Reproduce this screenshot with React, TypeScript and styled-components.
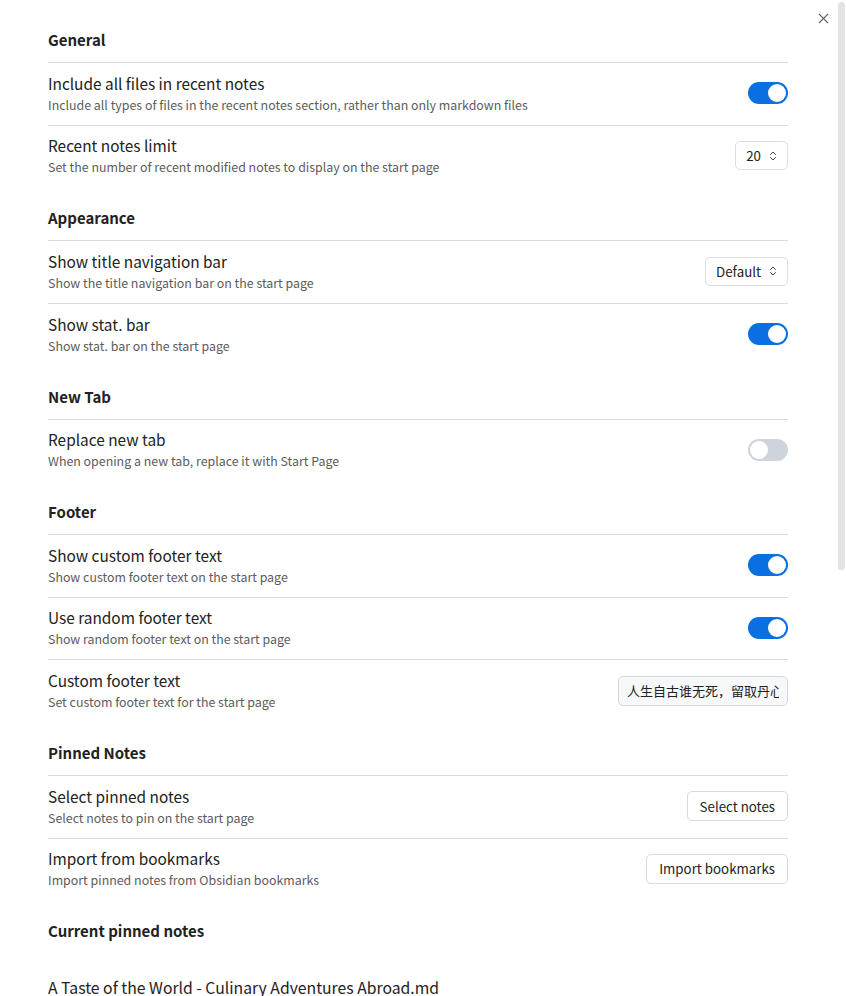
import React from "react";
import styled, { createGlobalStyle } from "styled-components";
import { ChevronsUpDown, X } from "lucide-react";

const GlobalStyle = createGlobalStyle`
  html, body {
    margin: 0;
    padding: 0;
    background: #ffffff;
  }
  body {
    font-family: "Noto Sans CJK SC", "Noto Sans", sans-serif;
    color: #222222;
  }
  * {
    box-sizing: border-box;
  }
`;

type Control =
  | { kind: "toggle"; on: boolean }
  | { kind: "select"; value: string }
  | { kind: "text"; value: string }
  | { kind: "button"; label: string };

interface ISetting {
  name: string;
  desc: string;
  control: Control;
}

interface ISection {
  title: string;
  items: ISetting[];
}

const SECTIONS: ISection[] = [
  {
    title: "General",
    items: [
      {
        name: "Include all files in recent notes",
        desc: "Include all types of files in the recent notes section, rather than only markdown files",
        control: { kind: "toggle", on: true },
      },
      {
        name: "Recent notes limit",
        desc: "Set the number of recent modified notes to display on the start page",
        control: { kind: "select", value: "20" },
      },
    ],
  },
  {
    title: "Appearance",
    items: [
      {
        name: "Show title navigation bar",
        desc: "Show the title navigation bar on the start page",
        control: { kind: "select", value: "Default" },
      },
      {
        name: "Show stat. bar",
        desc: "Show stat. bar on the start page",
        control: { kind: "toggle", on: true },
      },
    ],
  },
  {
    title: "New Tab",
    items: [
      {
        name: "Replace new tab",
        desc: "When opening a new tab, replace it with Start Page",
        control: { kind: "toggle", on: false },
      },
    ],
  },
  {
    title: "Footer",
    items: [
      {
        name: "Show custom footer text",
        desc: "Show custom footer text on the start page",
        control: { kind: "toggle", on: true },
      },
      {
        name: "Use random footer text",
        desc: "Show random footer text on the start page",
        control: { kind: "toggle", on: true },
      },
      {
        name: "Custom footer text",
        desc: "Set custom footer text for the start page",
        control: { kind: "text", value: "人生自古谁无死，留取丹心照汗青" },
      },
    ],
  },
  {
    title: "Pinned Notes",
    items: [
      {
        name: "Select pinned notes",
        desc: "Select notes to pin on the start page",
        control: { kind: "button", label: "Select notes" },
      },
      {
        name: "Import from bookmarks",
        desc: "Import pinned notes from Obsidian bookmarks",
        control: { kind: "button", label: "Import bookmarks" },
      },
    ],
  },
];

const PINNED = ["A Taste of the World - Culinary Adventures Abroad.md"];

const SettingControl: React.FC<{ control: Control }> = ({ control }) => {
  switch (control.kind) {
    case "toggle":
      return (
        <Toggle on={control.on}>
          <Knob />
        </Toggle>
      );
    case "select":
      return (
        <Dropdown>
          <span>{control.value}</span>
          <ChevronsUpDown size={12} strokeWidth={2} />
        </Dropdown>
      );
    case "text":
      return <TextInput type="text" value={control.value} readOnly />;
    case "button":
      return <Button>{control.label}</Button>;
  }
};

const App: React.FC = () => {
  return (
    <Window>
      <GlobalStyle />
      <Scroller>
        <Content>
          {SECTIONS.map((section) => (
            <React.Fragment key={section.title}>
              <Heading>{section.title}</Heading>
              {section.items.map((item) => (
                <Row key={item.name}>
                  <Info>
                    <Name>{item.name}</Name>
                    <Desc>{item.desc}</Desc>
                  </Info>
                  <SettingControl control={item.control} />
                </Row>
              ))}
            </React.Fragment>
          ))}
          <Heading plain>Current pinned notes</Heading>
          <PinnedList>
            {PINNED.map((note) => (
              <PinnedItem key={note}>{note}</PinnedItem>
            ))}
          </PinnedList>
        </Content>
      </Scroller>
      <ScrollThumb />
      <CloseButton>
        <X size={17} strokeWidth={1.5} />
      </CloseButton>
    </Window>
  );
};

const Window = styled.div`
  position: relative;
  height: 100vh;
  overflow: hidden;
`;

const Scroller = styled.div`
  height: 100%;
  overflow: hidden;
`;

const ScrollThumb = styled.div`
  position: absolute;
  top: 2px;
  right: 1px;
  width: 7px;
  height: 568px;
  border-radius: 4px;
  background: #e3e3e3;
`;

const Content = styled.div`
  padding: 9px 58px 40px 48px;
  display: flex;
  flex-direction: column;
`;

const Heading = styled.div<{ plain?: boolean }>`
  padding: 21px 0 12px;
  font-size: 15px;
  line-height: 20px;
  font-weight: 700;
  color: #222222;
  border-bottom: ${(p) => (p.plain ? "none" : "1px solid #d6dbe1")};
`;

const Row = styled.div`
  display: flex;
  align-items: center;
  justify-content: space-between;
  gap: 16px;
  padding: 9.6px 0 11.05px;
  & + & {
    border-top: 1px solid #d6dbe1;
  }
`;

const Info = styled.div`
  display: flex;
  flex-direction: column;
  gap: 3px;
  min-width: 0;
`;

const Name = styled.div`
  font-size: 15.4px;
  line-height: 20px;
  color: #222222;
`;

const Desc = styled.div`
  font-size: 12.4px;
  line-height: 18px;
  color: #5c5c5c;
`;

const Toggle = styled.div<{ on: boolean }>`
  flex-shrink: 0;
  width: 40px;
  height: 22px;
  border-radius: 11px;
  padding: 2px;
  display: flex;
  justify-content: ${(p) => (p.on ? "flex-end" : "flex-start")};
  background: ${(p) => (p.on ? "#0a6fe0" : "#ced4db")};
`;

const Knob = styled.div`
  width: 18px;
  height: 18px;
  border-radius: 50%;
  background: #ffffff;
`;

const Dropdown = styled.div`
  flex-shrink: 0;
  display: flex;
  align-items: center;
  gap: 6px;
  height: 29px;
  padding: 0 8px 0 10px;
  border: 1px solid #dedede;
  border-radius: 5px;
  background: #ffffff;
  font-size: 13.3px;
  color: #222222;
  svg {
    color: #444444;
  }
`;

const TextInput = styled.input`
  flex-shrink: 0;
  width: 170px;
  height: 30px;
  padding: 0 8px;
  border: 1px solid #d4d9e0;
  border-radius: 5px;
  background: #f6f8fa;
  font-family: "Noto Sans CJK SC", "Noto Sans", sans-serif;
  font-size: 13px;
  color: #222222;
  outline: none;
`;

const Button = styled.button`
  flex-shrink: 0;
  height: 30px;
  padding: 0 12px;
  border: 1px solid #dadada;
  border-radius: 5px;
  background: #ffffff;
  font-family: "Noto Sans CJK SC", "Noto Sans", sans-serif;
  font-size: 13.3px;
  color: #222222;
`;

const PinnedList = styled.div`
  display: flex;
  flex-direction: column;
  padding-top: 23px;
  gap: 20px;
`;

const PinnedItem = styled.div`
  font-size: 15.75px;
  line-height: 24px;
  color: #222222;
`;

const CloseButton = styled.div`
  position: absolute;
  top: 9px;
  right: 14px;
  width: 18px;
  height: 18px;
  display: flex;
  align-items: center;
  justify-content: center;
  color: #5c6370;
`;

export default App;
